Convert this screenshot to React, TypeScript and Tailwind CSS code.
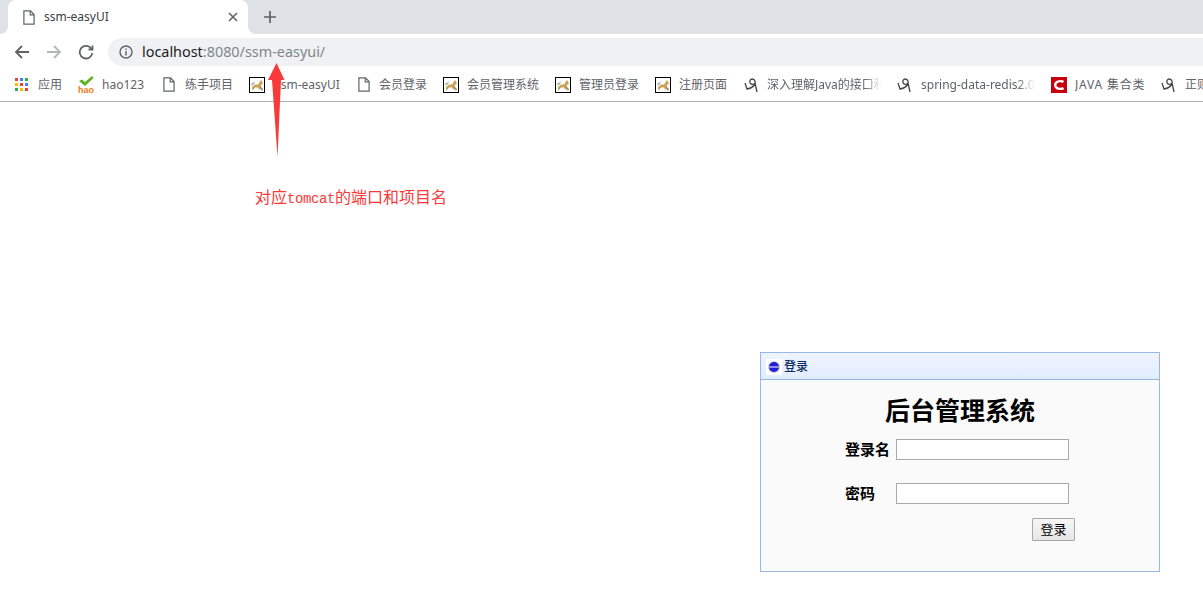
import React from 'react';

const cjk = "font-['Noto_Sans','Noto_Sans_CJK_SC',sans-serif]";

const FileIcon = ({ className = '' }: { className?: string }) => (
  <svg viewBox="0 0 12 15" className={`w-3 h-[15px] shrink-0 ${className}`} fill="none" stroke="#5f6368" strokeWidth="1.2">
    <path d="M0.9 0.9H7.5L11.1 4.5V14.1H0.9Z" />
    <path d="M7.2 0.9V4.8H11.1" />
  </svg>
);

const CatIcon = () => (
  <svg viewBox="0 0 16 16" className="w-4 h-4 shrink-0">
    <rect x="0.5" y="0.5" width="15" height="15" fill="#fff" stroke="#000" />
    <path d="M3 10L6 7.500L9 7.500L11 4.500L12 3L13 4.500L14 6.500L12 8L11.500 12.500H10L9 10.500L6 10.500L4 13L3 12.500Z" fill="#c9a35a" />
    <path d="M2 7L6 4.500L5 7L3 8.500Z" fill="#a8a8a8" />
    <path d="M11 9L14 12L13 14L11 11Z" fill="#9c8a63" />
  </svg>
);

const SwirlIcon = () => (
  <svg viewBox="0 0 16 16" className="w-4 h-4 shrink-0" fill="none" stroke="#444" strokeWidth="1.3">
    <path d="M1 6L3 12C6 11.500 9 10 10.500 8C12 6 11 2 8.500 2C6 2 5 4.500 6.500 6.500C8 8 10 7.500 11 6L13 15" />
  </svg>
);

const AppsIcon = () => {
  const colors = ['#ea4335', '#4285f4', '#34a853', '#fbbc05', '#ea4335', '#4285f4', '#34a853', '#fbbc05', '#ea4335'];
  return (
    <div className="grid grid-cols-3 gap-[2px] w-[13px] h-[13px] shrink-0">
      {colors.map((c, i) => (
        <span key={i} className="w-[3px] h-[3px]" style={{ backgroundColor: c }} />
      ))}
    </div>
  );
};

const HaoIcon = () => (
  <svg viewBox="0 0 16 18" className="w-4 h-[18px] shrink-0">
    <path d="M1 5L4 3.500L7 6L14 0L15.500 2L7 10Z" fill="#5fb221" />
    <text x="0" y="17" fontSize="9" fontWeight="700" fill="#ef7a1a" fontFamily="Liberation Sans">hao</text>
  </svg>
);

const RedCIcon = () => (
  <svg viewBox="0 0 16 16" className="w-4 h-4 shrink-0">
    <rect width="16" height="16" fill="#c7000b" />
    <path d="M12.500 5C11 3.800 6.500 3.500 4.800 6C4 7.300 4 8.700 4.800 10C6.500 12.500 11 12.200 12.500 11" fill="none" stroke="#fff" strokeWidth="2.400" />
  </svg>
);

const bookmarks: { icon: React.ReactNode; label: string; w: string; text?: string }[] = [
  { icon: <AppsIcon />, label: '应用', w: 'w-[63px] gap-[10px]' },
  { icon: <HaoIcon />, label: 'hao123', w: 'w-[85px] gap-2' },
  { icon: <FileIcon />, label: '练手项目', w: 'w-[86px] gap-[10px]' },
  { icon: <CatIcon />, label: 'ssm-easyUI', w: 'w-[109px] gap-[10px]' },
  { icon: <FileIcon />, label: '会员登录', w: 'w-[85px] gap-[9px]' },
  { icon: <CatIcon />, label: '会员管理系统', w: 'w-[112px] gap-2' },
  { icon: <CatIcon />, label: '管理员登录', w: 'w-[100px] gap-2' },
  { icon: <CatIcon />, label: '注册页面', w: 'w-[89px] gap-2' },
  {
    icon: <SwirlIcon />,
    label: '深入理解Java的接口和',
    w: 'w-[153px] gap-[7px]',
    text: 'w-[114px] [mask-image:linear-gradient(to_right,black_85%,transparent)]',
  },
  {
    icon: <SwirlIcon />,
    label: 'spring-data-redis2.0',
    w: 'w-[154px] gap-2',
    text: 'w-[114px] [mask-image:linear-gradient(to_right,black_85%,transparent)]',
  },
  { icon: <RedCIcon />, label: 'JAVA 集合类', w: 'w-[110px] gap-2', text: 'tracking-[0.8px]' },
  { icon: <SwirlIcon />, label: '正则', w: 'w-[42px] gap-2' },
];

export default function App() {
  return (
    <div className={`relative h-[613px] w-[1203px] overflow-hidden bg-white ${cjk}`}>
      {/* tab strip */}
      <div className="flex h-[34px] bg-white">
        <div className="w-2 rounded-br-lg bg-[#dee1e6]" />
        <div className="bg-[#dee1e6]">
          <div className="flex h-[34px] w-[240px] items-center rounded-t-lg bg-white pl-[15px] pr-[10px]">
            <FileIcon />
            <span className="ml-[9px] flex-1 text-xs text-[#3c4043]">ssm-easyUI</span>
            <svg viewBox="0 0 10 10" className="h-[10px] w-[10px]" stroke="#5f6368" strokeWidth="1.6">
              <path d="M1 1L9 9M9 1L1 9" />
            </svg>
          </div>
        </div>
        <div className="flex flex-1 items-center rounded-bl-lg bg-[#dee1e6] pl-4">
          <svg viewBox="0 0 12 12" className="h-3 w-3" stroke="#5f6368" strokeWidth="1.7">
            <path d="M6 0V12M0 6H12" />
          </svg>
        </div>
      </div>

      {/* toolbar */}
      <div className="flex h-[34px] items-center bg-white pl-[14px] pt-[2px]">
        <svg viewBox="0 0 16 16" className="h-4 w-4" fill="none" stroke="#5f6368" strokeWidth="1.8">
          <path d="M15 8H2M8 2L2 8L8 14" />
        </svg>
        <svg viewBox="0 0 16 16" className="ml-4 h-4 w-4" fill="none" stroke="#b4b7ba" strokeWidth="1.8">
          <path d="M1 8H14M8 2L14 8L8 14" />
        </svg>
        <svg viewBox="0 0 16 16" className="ml-4 h-4 w-4" fill="none" stroke="#5f6368" strokeWidth="1.8">
          <path d="M13.500 5A6.300 6.300 0 1 0 14.300 9" />
          <path d="M14.500 1.500V5.500H10.500" />
        </svg>
        <div className="ml-[14px] flex h-7 flex-1 items-center rounded-l-[14px] bg-[#eff1f3] pl-[11px]">
          <svg viewBox="0 0 14 14" className="h-[14px] w-[14px]" fill="none" stroke="#5f6368" strokeWidth="1.4">
            <circle cx="7" cy="7" r="6" />
            <path d="M7 6V10.500M7 3.500V5" />
          </svg>
          <span className="ml-[9px] text-[14.4px] text-[#202124]">
            localhost<span className="text-[#80868b]">:8080/ssm-easyui/</span>
          </span>
        </div>
      </div>

      {/* bookmarks bar */}
      <div className="flex h-[34px] items-center overflow-hidden border-b border-[#b2b2b2] pl-[15px]">
        {bookmarks.map((b, i) => (
          <div key={i} className={`flex shrink-0 items-center ${b.w}`}>
            {b.icon}
            <span className={`overflow-hidden whitespace-nowrap text-xs text-[#5f6368] ${b.text ?? ''}`}>{b.label}</span>
          </div>
        ))}
      </div>

      {/* page */}
      <div className="flex justify-end pr-[43px] pt-[250px]">
        <div className="h-[220px] w-[400px] border border-[#95b8e7]">
          <div className="flex h-[27px] items-center gap-[2px] border-b border-[#95b8e7] bg-gradient-to-b from-[#eff5ff] to-[#e0ecff] pl-[5px] pt-[1px]">
            <span className="flex h-4 w-4 items-center justify-center bg-white">
              <span className="relative h-[10px] w-[10px] overflow-hidden rounded-full bg-[#2020d0] ring-1 ring-[#c8c8e8]">
                <span className="absolute left-0 top-1 h-[2px] w-full bg-[#9090e8]" />
              </span>
            </span>
            <span className="text-xs font-medium text-[#0e2d5f]">登录</span>
          </div>
          <div className="h-[191px] bg-[#fafafa]">
            <h1 className="pt-[15px] text-center text-[25px] font-bold leading-[30px] text-black">后台管理系统</h1>
            <div className="mt-[14px] flex h-[21px] items-center pl-[84px]">
              <span className="w-[51px] text-[15px] font-bold text-black">登录名</span>
              <input className="h-[21px] w-[173px] border border-[#a9a9a9] bg-white" />
            </div>
            <div className="mt-[23px] flex h-[21px] items-center pl-[84px]">
              <span className="w-[51px] text-[15px] font-bold text-black">密码</span>
              <input className="h-[21px] w-[173px] border border-[#a9a9a9] bg-white" />
            </div>
            <div className="mt-[14px] flex justify-end pr-[84px]">
              <button className="h-[23px] w-[43px] rounded-[1px] border border-[#a9a9a9] bg-gradient-to-b from-[#f6f6f6] to-[#e6e6e6] text-[13px] leading-none text-black">
                登录
              </button>
            </div>
          </div>
        </div>
      </div>

      {/* annotation */}
      <svg viewBox="0 0 17 94" className="absolute left-[268px] top-[63px] h-[94px] w-[17px]">
        <path d="M8.500 0L16.500 17H13L9.500 94L4 17H0Z" fill="#f93a3a" />
      </svg>
      <div className="absolute left-[255px] top-[186px] text-base leading-5 text-[#f93a3a] font-['Noto_Sans_CJK_SC',monospace]">
        对应<span className="font-['Liberation_Mono',monospace] text-sm tracking-[-0.4px]">tomcat</span>的端口和项目名
      </div>
    </div>
  );
}
